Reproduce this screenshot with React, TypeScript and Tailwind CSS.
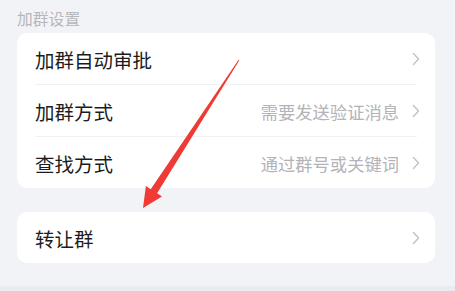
import React from 'react';

const font = { fontFamily: '"Noto Sans CJK SC", "Noto Sans", sans-serif' };

function Chevron() {
  return (
    <svg width="10" height="16" viewBox="0 0 10 16" fill="none" className="shrink-0">
      <path d="M2.5 2.5 L7.5 8 L2.5 13.5" stroke="#c4c4c8" strokeWidth="1.5" strokeLinecap="round" strokeLinejoin="round" />
    </svg>
  );
}

function Row({ label, value }: { label: string; value?: string }) {
  return (
    <div className="flex h-[51px] items-center pl-[18px] pr-[14px]">
      <span className="flex-1 pt-[3px] text-[19.5px] leading-none text-[#1c1c1e]">{label}</span>
      {value && <span className="mr-[12px] pt-[3px] text-[17.3px] leading-none text-[#b3b3b8]">{value}</span>}
      <Chevron />
    </div>
  );
}

export default function App() {
  return (
    <div className="relative h-[291px] w-[455px] overflow-hidden bg-[#f2f3f7]" style={font}>
      <div className="pl-[17px] pt-[10px] text-[15.8px] leading-[17px] text-[#b6b6bb]">加群设置</div>

      <div className="ml-[17px] mt-[6px] w-[418px] rounded-[10px] bg-white">
        <Row label="加群自动审批" />
        <div className="ml-[18px] mr-[18px] h-px bg-[#f1f1f3]" />
        <Row label="加群方式" value="需要发送验证消息" />
        <div className="ml-[18px] mr-[18px] h-px bg-[#f1f1f3]" />
        <Row label="查找方式" value="通过群号或关键词" />
      </div>

      <div className="ml-[17px] mt-[24px] w-[418px] rounded-[10px] bg-white">
        <Row label="转让群" />
      </div>

      <div className="absolute bottom-0 left-0 h-[5px] w-full bg-[#eaebef]" />

      {/* annotation arrow */}
      <svg className="pointer-events-none absolute left-0 top-0" width="455" height="291" viewBox="0 0 455 291">
        <polygon
          points="239.4,60.3 157.1,193.3 162,196.4 143,208 145.9,186 150.7,189.2 238.6,59.7"
          fill="#ef3a35"
        />
      </svg>
    </div>
  );
}
